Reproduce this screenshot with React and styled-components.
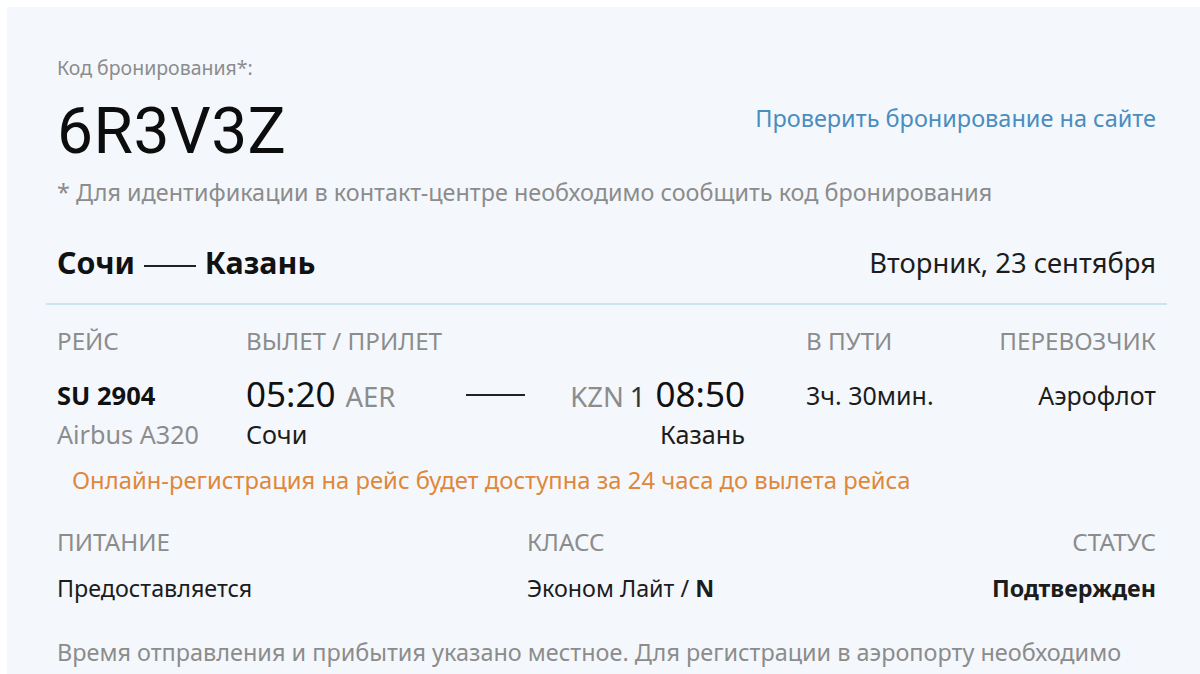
import React from 'react';
import styled, { createGlobalStyle } from 'styled-components';

const GlobalStyle = createGlobalStyle`
  html, body {
    margin: 0;
    padding: 0;
    background: #ffffff;
    overflow: hidden;
  }
  body {
    font-family: "Noto Sans", Roboto, "Liberation Sans", sans-serif;
    color: #1c1c1c;
  }
`;

const flight = {
  number: 'SU 2904',
  aircraft: 'Airbus A320',
  depTime: '05:20',
  depCode: 'AER',
  depCity: 'Сочи',
  arrCode: 'KZN',
  arrTerminal: '1',
  arrTime: '08:50',
  arrCity: 'Казань',
  duration: '3ч. 30мин.',
  carrier: 'Аэрофлот',
};

function App() {
  return (
    <>
      <GlobalStyle />
      <Card>
        <Section>
          <Head>
            <div>
              <Label>Код бронирования*:</Label>
              <Code>6R3V3Z</Code>
            </div>
            <CheckLink href="#">Проверить бронирование на сайте</CheckLink>
          </Head>
          <Note>* Для идентификации в контакт-центре необходимо сообщить код бронирования</Note>

          <RouteRow>
            <Route>
              Сочи <RouteDash /> Казань
            </Route>
            <DateText>Вторник, 23 сентября</DateText>
          </RouteRow>
        </Section>

        <Divider />

        <Section>
          <FlightRow>
            <Caption>РЕЙС</Caption>
            <Caption>ВЫЛЕТ / ПРИЛЕТ</Caption>
            <Caption>В ПУТИ</Caption>
            <Caption align="right">ПЕРЕВОЗЧИК</Caption>
          </FlightRow>

          <FlightRow top={19} height={40}>
            <FlightNo>{flight.number}</FlightNo>
            <Times>
              <TimePoint>
                <Time>{flight.depTime}</Time>
                <Airport>{flight.depCode}</Airport>
              </TimePoint>
              <PathLine />
              <TimePoint end>
                <Airport>{flight.arrCode}</Airport>
                <Terminal>{flight.arrTerminal}</Terminal>
                <Time>{flight.arrTime}</Time>
              </TimePoint>
            </Times>
            <Value>{flight.duration}</Value>
            <Value align="right">{flight.carrier}</Value>
          </FlightRow>

          <FlightRow top={6}>
            <SubValue muted>{flight.aircraft}</SubValue>
            <Cities>
              <SubValue>{flight.depCity}</SubValue>
              <SubValue>{flight.arrCity}</SubValue>
            </Cities>
          </FlightRow>

          <Warning>Онлайн-регистрация на рейс будет доступна за 24 часа до вылета рейса</Warning>

          <InfoGrid>
            <Caption>ПИТАНИЕ</Caption>
            <Caption>КЛАСС</Caption>
            <Caption align="right">СТАТУС</Caption>
            <InfoValue>Предоставляется</InfoValue>
            <InfoValue>
              Эконом Лайт / <b>N</b>
            </InfoValue>
            <InfoValue align="right" bold>
              Подтвержден
            </InfoValue>
          </InfoGrid>

          <Footnote>
            Время отправления и прибытия указано местное. Для регистрации в аэропорту необходимо
          </Footnote>
        </Section>
      </Card>
    </>
  );
}

export default App;

const grey = '#8c8c8c';

const Card = styled.div`
  margin: 7px -40px 0 7px;
  padding: 49px 74px 40px 39px;
  background: #f4f8fd;
  min-height: 700px;
`;

const Section = styled.div`
  width: 1099px;
  padding: 0 11px;
`;

const Head = styled.div`
  display: flex;
  justify-content: space-between;
  align-items: flex-start;
`;

const Label = styled.div`
  font-size: 19.5px;
  line-height: 24px;
  color: ${grey};
`;

const Code = styled.div`
  margin-top: 16px;
  font-family: Roboto, "Noto Sans", sans-serif;
  font-size: 64px;
  line-height: 72px;
  color: #0d0d0d;
  letter-spacing: 0.5px;
`;

const CheckLink = styled.a`
  margin-top: 48px;
  font-size: 23.5px;
  line-height: 28px;
  color: #4a8dbf;
  text-decoration: none;
`;

const Note = styled.div`
  margin-top: 10px;
  font-size: 23.4px;
  line-height: 28px;
  color: ${grey};
`;

const RouteRow = styled.div`
  margin-top: 40px;
  display: flex;
  justify-content: space-between;
  align-items: center;
  height: 34px;
`;

const Route = styled.div`
  font-size: 30.4px;
  line-height: 34px;
  font-weight: 700;
  color: #111;
`;

const RouteDash = styled.span`
  display: inline-block;
  width: 52px;
  height: 2px;
  margin: 0 1px;
  background: #222;
  vertical-align: middle;
`;

const DateText = styled.div`
  font-size: 27.4px;
  line-height: 34px;
  color: #1c1c1c;
`;

const Divider = styled.div`
  margin-top: 23px;
  width: 1121px;
  height: 2px;
  background: #cfe3ee;
`;

const FlightRow = styled.div`
  margin-top: ${(p) => p.top || 22}px;
  height: ${(p) => p.height || 28}px;
  display: grid;
  grid-template-columns: 189px 560px 1fr auto;
  align-items: center;
`;

const Caption = styled.div`
  font-size: 24.2px;
  line-height: 28px;
  color: ${grey};
  text-align: ${(p) => p.align || 'left'};
`;

const FlightNo = styled.div`
  font-size: 25.5px;
  font-weight: 700;
  color: #111;
`;

const Times = styled.div`
  width: 499px;
  display: grid;
  grid-template-columns: 1fr auto 1fr;
  align-items: center;
`;

const TimePoint = styled.div`
  justify-self: ${(p) => (p.end ? 'end' : 'start')};
  display: flex;
  align-items: baseline;
  gap: 10px;
  white-space: nowrap;
`;

const Time = styled.span`
  font-size: 35px;
  line-height: 40px;
  color: #111;
`;

const Airport = styled.span`
  font-size: 27.5px;
  color: ${grey};
`;

const Terminal = styled.span`
  margin-left: -4px;
  font-size: 27.5px;
  color: #333;
`;

const PathLine = styled.span`
  width: 59px;
  height: 2px;
  background: #222;
`;

const Value = styled.div`
  font-size: 25px;
  color: #1c1c1c;
  text-align: ${(p) => p.align || 'left'};
`;

const Cities = styled.div`
  width: 499px;
  display: flex;
  justify-content: space-between;
`;

const SubValue = styled.div`
  font-size: 25.2px;
  line-height: 28px;
  color: ${(p) => (p.muted ? grey : '#1c1c1c')};
`;

const Warning = styled.div`
  margin-top: 18px;
  padding-left: 15px;
  font-size: 23.8px;
  line-height: 28px;
  color: #e0873a;
`;

const InfoGrid = styled.div`
  margin-top: 34px;
  display: grid;
  grid-template-columns: 470px 1fr auto;
  row-gap: 18px;
`;

const InfoValue = styled.div`
  font-size: 23.3px;
  line-height: 28px;
  color: #1c1c1c;
  font-weight: ${(p) => (p.bold ? 700 : 400)};
  text-align: ${(p) => p.align || 'left'};

  b {
    font-weight: 700;
  }
`;

const Footnote = styled.div`
  margin-top: 36px;
  font-size: 23.45px;
  line-height: 28px;
  color: ${grey};
`;
